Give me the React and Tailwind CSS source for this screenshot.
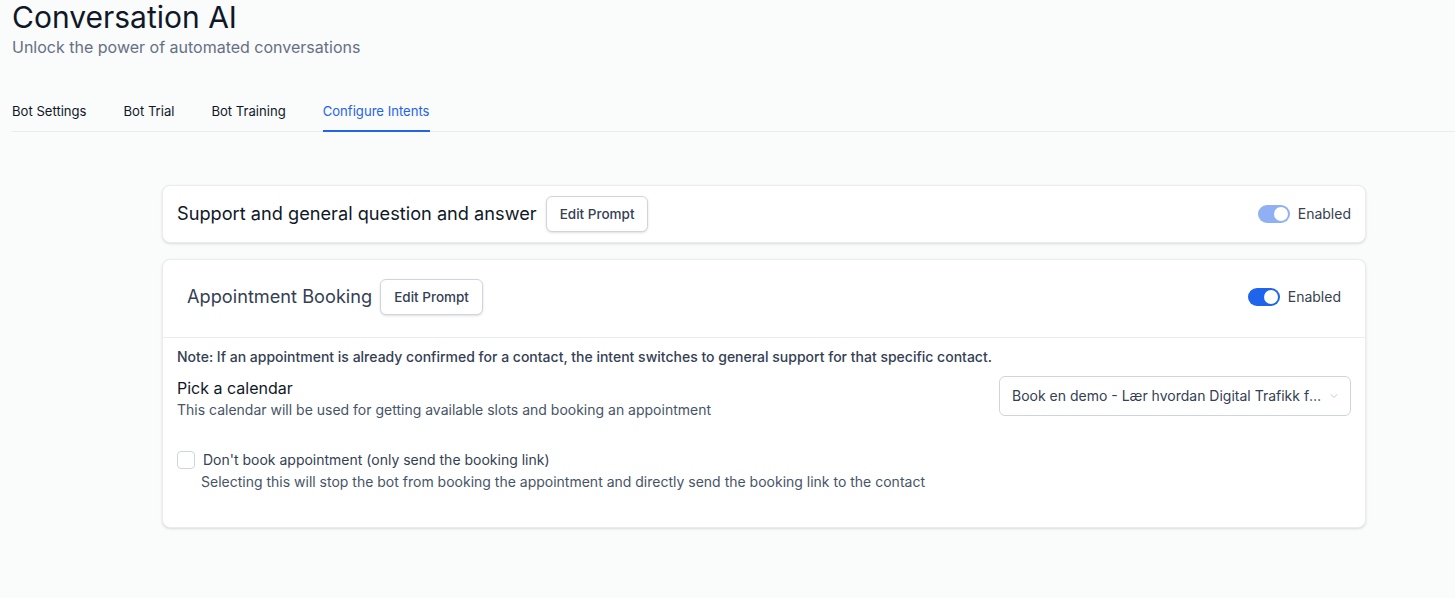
import { ChevronDown } from 'lucide-react'

function Toggle({ on = true, faded = false }) {
  return (
    <div className="flex items-center gap-2">
      <span
        className={`flex items-center justify-end w-8 h-[18px] rounded-full px-[2px] ${
          faded ? 'bg-[#8fb1f4]' : 'bg-[#1f65eb]'
        }`}
      >
        <span className="block w-[14px] h-[14px] rounded-full bg-white" />
      </span>
      <span className="text-sm text-[#374151]">{on ? 'Enabled' : 'Disabled'}</span>
    </div>
  )
}

function EditPromptButton() {
  return (
    <button className="h-9 px-[13px] rounded-md border border-[#d0d5dd] bg-white text-[13.5px] font-medium text-[#344054] shadow-sm">
      Edit Prompt
    </button>
  )
}

export default function App() {
  const tabs = ['Bot Settings', 'Bot Trial', 'Bot Training', 'Configure Intents']
  const active = 'Configure Intents'

  return (
    <div className="min-h-[598px] bg-[#fafbfb] pl-3 font-['Inter',sans-serif] text-[#101828]">
      <h1 className="text-[30px] leading-[34px] text-[#101828]">Conversation AI</h1>
      <p className="mt-px text-base leading-6 text-[#667085]">Unlock the power of automated conversations</p>

      <nav className="mt-[42px] flex gap-[37px] border-b border-[#eaecf0]">
        {tabs.map((t) => (
          <div
            key={t}
            className={`pb-[9px] text-[13.1px] leading-5 border-b-2 -mb-px ${
              t === active ? 'border-[#2563eb] text-[#2563eb]' : 'border-transparent text-[#101828]'
            }`}
          >
            {t}
          </div>
        ))}
      </nav>

      <div className="ml-[150px] mt-[53px] w-[1204px] flex flex-col gap-4">
        <div className="bg-white rounded-lg border border-[#eaecf0] shadow-sm px-[14px] py-[10px] flex items-center justify-between">
          <div className="flex items-center gap-[9px]">
            <span className="text-[18.2px] text-[#101828]">Support and general question and answer</span>
            <EditPromptButton />
          </div>
          <Toggle faded />
        </div>

        <div className="bg-white rounded-lg border border-[#eaecf0] shadow-sm">
          <div className="flex items-center justify-between px-6 pt-[19px] pb-[22px] border-b border-[#eaecf0]">
            <div className="flex items-center gap-2">
              <span className="text-[18.2px] text-[#344054]">Appointment Booking</span>
              <EditPromptButton />
            </div>
            <Toggle />
          </div>

          <div className="px-[14px] pt-[9px] pb-[35px]">
            <p className="text-sm leading-5 font-medium text-[#344054]">
              Note: If an appointment is already confirmed for a contact, the intent switches to general support for that specific contact.
            </p>
            <div className="mt-[9px] flex items-start justify-between">
              <div>
                <div className="text-base leading-6 text-[#101828]">Pick a calendar</div>
                <div className="text-sm leading-5 text-[#475467]">
                  This calendar will be used for getting available slots and booking an appointment
                </div>
              </div>
              <div className="w-[352px] h-10 rounded-md border border-[#d0d5dd] bg-white flex items-center pl-3 pr-[10px] gap-1">
                <span className="flex-1 truncate text-sm text-[#344054]">
                  Book en demo - Lær hvordan Digital Trafikk fungerer
                </span>
                <ChevronDown className="w-3 h-3 text-[#b0b5bd]" strokeWidth={1.5} />
              </div>
            </div>

            <div className="mt-[30px]">
              <label className="flex items-center gap-2">
                <span className="w-[18px] h-[18px] rounded border border-[#d0d5dd] bg-white" />
                <span className="text-sm leading-5 text-[#344054]">Don't book appointment (only send the booking link)</span>
              </label>
              <div className="ml-6 mt-[2px] text-sm leading-5 text-[#475467]">
                Selecting this will stop the bot from booking the appointment and directly send the booking link to the contact
              </div>
            </div>
          </div>
        </div>
      </div>
    </div>
  )
}
